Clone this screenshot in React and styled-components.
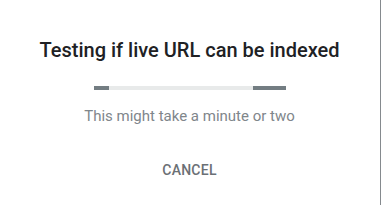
import React from 'react';
import styled, { createGlobalStyle } from 'styled-components';

const GlobalStyle = createGlobalStyle`
  html, body {
    margin: 0;
    padding: 0;
    background: #fff;
  }
  body {
    font-family: Roboto, "Liberation Sans", Arial, sans-serif;
    -webkit-font-smoothing: antialiased;
  }
`;

const Dialog = styled.div`
  box-sizing: border-box;
  width: 381px;
  height: 205px;
  border-right: 1px solid #858a8e;
  display: flex;
  flex-direction: column;
  align-items: center;
  padding-top: 36px;
  padding-right: 1px;
`;

const Title = styled.h2`
  margin: 0;
  font-size: 20px;
  line-height: 28px;
  font-weight: 500;
  color: #202124;
`;

const Progress = styled.div`
  margin-top: 22px;
  width: 192px;
  height: 4px;
  background: #e8eaea;
  display: flex;
  justify-content: space-between;
`;

const Segment = styled.div`
  width: ${(props) => props.size}px;
  height: 100%;
  background: #737d82;
`;

const Hint = styled.p`
  margin: 16px 0 0;
  font-size: 15px;
  line-height: 20px;
  color: #80868b;
`;

const CancelButton = styled.button`
  margin-top: 26px;
  border: none;
  background: none;
  padding: 8px 8px;
  font-family: inherit;
  font-size: 14px;
  line-height: 20px;
  font-weight: 500;
  letter-spacing: 0.25px;
  color: #6b7075;
  cursor: pointer;
`;

const App = () => {
  return (
    <>
      <GlobalStyle />
      <Dialog>
        <Title>Testing if live URL can be indexed</Title>
        <Progress>
          <Segment size={15} />
          <Segment size={33} />
        </Progress>
        <Hint>This might take a minute or two</Hint>
        <CancelButton>CANCEL</CancelButton>
      </Dialog>
    </>
  );
};

export default App;
